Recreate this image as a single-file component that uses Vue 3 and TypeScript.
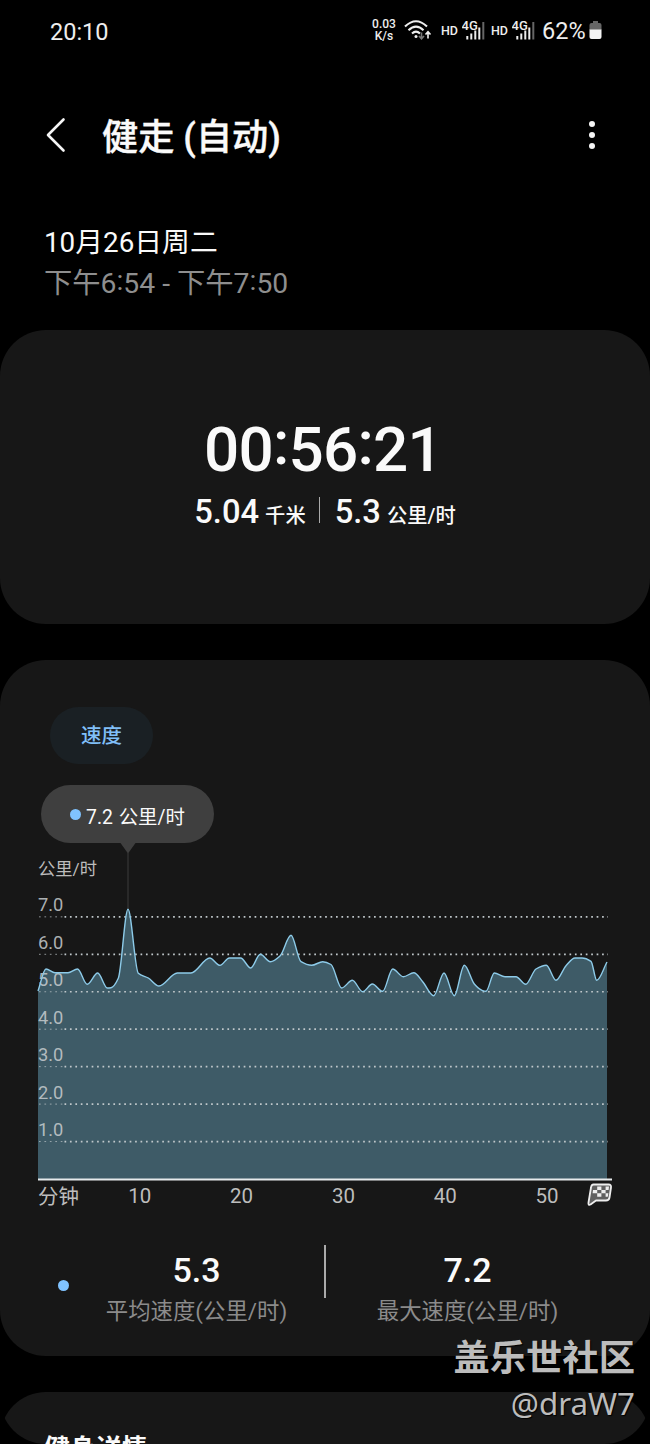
<script setup lang="ts">
type Point = [number, number]

// Speed samples in chart coordinates (origin at the left end of the time axis)
const samples: Point[] = [
  [0, 141], [8, 119], [17, 122.7], [30, 122.7], [39.5, 119], [49.3, 134.3], [59.7, 123], [69.3, 138],
  [73, 137.7], [80.3, 128.3], [90, 59.3], [100.3, 123.3], [110.3, 128], [121, 136], [139.3, 123], [153, 123],
  [171.7, 108], [182, 115.3], [191.3, 108], [202.7, 108], [212.7, 118], [222.3, 104.3], [232.3, 111.7],
  [242, 106], [253, 85.3], [263, 111.7], [273.7, 115.3], [284.7, 111.7], [293, 114.5], [303.7, 138],
  [314.3, 130.3], [324.7, 141.7], [334.3, 134], [344.7, 141.3], [354.7, 119], [365.3, 126.7], [375.8, 122.8],
  [384.7, 131.7], [395.7, 145.7], [406, 123], [416.3, 145.7], [426.3, 115.3], [436.3, 134], [444, 140.3],
  [448, 141.3], [456.3, 123], [467, 126.7], [478, 126.7], [487.7, 134.3], [498, 119], [508.3, 115.3],
  [518, 130.3], [528, 115.7], [537, 108], [544, 108], [553, 111.3], [558.7, 130.3], [569, 112],
]

// Monotone cubic smoothing: flat tangents at every local extreme
function smooth(pts: Point[]): string {
  const n = pts.length
  const d: number[] = []
  for (let i = 0; i < n - 1; i++) d.push((pts[i + 1][1] - pts[i][1]) / (pts[i + 1][0] - pts[i][0]))
  const m = pts.map((_, i) => {
    if (i === 0) return d[0]
    if (i === n - 1) return d[n - 2]
    return d[i - 1] * d[i] <= 0 ? 0 : (2 * d[i - 1] * d[i]) / (d[i - 1] + d[i])
  })
  let path = `M${pts[0][0]} ${pts[0][1]}`
  for (let i = 0; i < n - 1; i++) {
    const [x0, y0] = pts[i]
    const [x1, y1] = pts[i + 1]
    const h = (x1 - x0) / 3
    path += `C${(x0 + h).toFixed(2)} ${(y0 + m[i] * h).toFixed(2)} ${(x1 - h).toFixed(2)} ${(y1 - m[i + 1] * h).toFixed(2)} ${x1} ${y1}`
  }
  return path
}

const line = smooth(samples)
const area = `${line}V329H0Z`
const levels = [7, 6, 5, 4, 3, 2, 1].map((v) => ({ label: v.toFixed(1), y: 329 - v * 37.45 }))
const ticks = [10, 20, 30, 40, 50].map((v) => ({ label: String(v), x: v * 10.18 }))
const stats = [
  { value: '5.3', label: '平均速度(公里/时)' },
  { value: '7.2', label: '最大速度(公里/时)' },
]
</script>

<template>
  <div class="screen">
    <header class="status">
      <span class="clock">20:10</span>
      <div class="indicators">
        <div class="rate"><span>0.03</span><span>K/s</span></div>
        <svg class="wifi" width="28" height="22" viewBox="0 0 28 22">
          <g fill="none" stroke="#eee" stroke-width="2.100">
            <path d="M1 7.500Q12 -3 23 7.500" />
            <path d="M4.500 11.200Q12 4 19.500 11.200" />
            <path d="M8 14.500Q12 10.800 16 14.500" />
          </g>
          <circle cx="12" cy="17.500" r="1.500" fill="#eee" />
          <path d="M17.500 13.500v6M15 17l2.500 2.800 2.500-2.800" fill="none" stroke="#777" stroke-width="1.600" />
          <path d="M24 19.500v-6M21.500 15.500l2.500-2.800 2.500 2.800" fill="none" stroke="#eee" stroke-width="1.600" />
        </svg>
        <div v-for="n in 2" :key="n" class="sim">
          <span class="hd">HD</span>
          <svg width="24" height="22" viewBox="0 0 24 22">
            <text x="-.5" y="10.600" class="net">4G</text>
            <path d="M5.300 17v3.500M9.300 14.500v6M13.300 11.500v9M17.300 8.500v12" stroke="#eee" stroke-width="2" />
            <path d="M21.300 3v17.500" stroke="#666" stroke-width="2" />
          </svg>
        </div>
        <span class="percent">62%</span>
        <svg class="battery" width="13" height="20" viewBox="0 0 13 20">
          <path d="M4 1h5v2h1.500a2 2 0 0 1 2 2v5H.5V5a2 2 0 0 1 2-2H4z" fill="#666" />
          <path d="M.5 9.500h12V17a2 2 0 0 1-2 2h-8a2 2 0 0 1-2-2z" fill="#f4f4f4" />
        </svg>
      </div>
    </header>

    <nav class="bar">
      <svg class="back" width="20" height="36" viewBox="0 0 20 36">
        <path d="M17.500 2.500L2 18L17.500 33.500" fill="none" stroke="#f5f5f5" stroke-width="2.600" stroke-linecap="round" stroke-linejoin="round" />
      </svg>
      <h1>健走 (自动)</h1>
      <svg class="more" width="8" height="30" viewBox="0 0 8 30">
        <g fill="#f5f5f5"><circle cx="4" cy="4" r="3" /><circle cx="4" cy="15" r="3" /><circle cx="4" cy="26" r="3" /></g>
      </svg>
    </nav>

    <div class="when">
      <div class="date">10月26日周二</div>
      <div class="time">下午6<span class="colon">:</span>54 - 下午7<span class="colon">:</span>50</div>
    </div>

    <section class="card summary">
      <div class="duration">00<span class="colon">:</span>56<span class="colon">:</span>21</div>
      <div class="totals">
        <span class="num">5.04</span><span class="unit">千米</span>
        <i></i>
        <span class="num">5.3</span><span class="unit">公里/时</span>
      </div>
    </section>

    <section class="card speed">
      <div class="chip">速度</div>
      <div class="bubble"><b></b><span>7.2 公里/时</span></div>
      <svg class="chart" width="594" height="374" viewBox="-1 0 594 374">
        <path d="M82.500 0h15l-7.500 10.500z" fill="#3f3f3f" />
        <path d="M90 10v56" stroke="#343434" stroke-width="1.300" />
        <text x="0" y="31.500" class="axis-unit">公里/时</text>
        <g transform="translate(0 7)">
          <path :d="area" fill="#3e5b67" />
          <g v-for="l in levels" :key="l.label">
            <path :d="`M1 ${l.y}H25`" class="dots faint" />
            <path :d="`M26.500 ${l.y}H570`" class="dots" />
            <text x="0" :y="l.y - 5.600" class="level">{{ l.label }}</text>
          </g>
          <path :d="line" fill="none" stroke="#8dcbe9" stroke-width="1.400" stroke-linejoin="round" />
          <path d="M0 329.500H574" stroke="#e6eaec" stroke-width="1.800" />
          <text x="0" y="353.500" class="tick">分钟</text>
          <text v-for="t in ticks" :key="t.label" :x="t.x" y="353" class="tick mid">{{ t.label }}</text>
          <g transform="translate(549 332.500)">
            <path d="M6.500 2H21.500Q24.500 2 24 5L22.500 15Q22 18 19 18H9L3.500 22Q1 23 1.500 20L4 5Q4.400 2 6.500 2Z" fill="#606060" stroke="#eee" stroke-width="1.800" stroke-linejoin="round" />
            <path d="M6 7.400h4.200v3.400H5.600zM10.200 4h4.200v3.400h-4.200zM14.400 7.400h4.200v3.400h-4.200zM18.600 4h3.400l-.4 3.400h-3zM10.200 10.800h4.200v3.400h-4.200zM18.600 10.800h2.800l-.6 3.400h-2.200z" fill="#eee" />
          </g>
        </g>
      </svg>
      <div class="stats">
        <b class="key"></b>
        <div v-for="s in stats" :key="s.label" class="stat">
          <div class="value">{{ s.value }}</div>
          <div class="label">{{ s.label }}</div>
        </div>
      </div>
    </section>

    <div class="next">
      <section class="card details"><h2>健身详情</h2></section>
    </div>

    <div class="watermark">
      <div class="community">盖乐世社区</div>
      <div class="author">@draW7</div>
    </div>
  </div>
</template>

<style>
html, body { background: #000; }
</style>

<style scoped>
.screen {
  position: relative;
  width: 650px;
  height: 1444px;
  overflow: hidden;
  background: #000;
  color: #fafafa;
  font-family: Roboto, "Noto Sans CJK SC", sans-serif;
  white-space: nowrap;
}
.status {
  height: 60px;
  box-sizing: border-box;
  padding: 0 48px 0 50px;
  display: flex;
  justify-content: space-between;
  align-items: center;
}
.clock { font-size: 23.5px; color: #eee; line-height: 30px; padding-top: 3px; }
.indicators { display: flex; align-items: center; color: #eee; }
.rate {
  display: flex;
  flex-direction: column;
  align-items: center;
  width: 26px;
  font-size: 12px;
  font-weight: 500;
  line-height: 11.5px;
  padding-top: 1px;
}
.wifi { margin: 0 1px 0 7px; }
.sim { display: flex; align-items: center; margin-left: 8px; }
.sim svg { margin-left: 3px; }
.sim + .sim { margin-left: 5px; }
.hd { font-size: 12.5px; font-weight: 500; width: 18px; }
.net { font-size: 13px; font-weight: 500; fill: #eee; }
.percent { font-size: 23.5px; margin-left: 6px; width: 45px; padding-top: 1px; }
.battery { margin-left: 2px; }
.bar {
  height: 150px;
  box-sizing: border-box;
  padding: 0 54px 0 46px;
  display: flex;
  align-items: center;
}
h1 {
  margin: 5px 0 0 36px;
  font-size: 36.2px;
  font-weight: 500;
  line-height: 50px;
  -webkit-text-stroke: .4px #fafafa;
}
.more { margin-left: auto; }
.when { height: 120px; box-sizing: border-box; padding: 13px 0 0 44px; }
.date { font-size: 27.8px; line-height: 40px; }
.time { font-size: 28.3px; line-height: 40px; color: #8e8e8e; padding-top: 1px; }
.colon { position: relative; top: -.09em; }
.card { background: #171717; border-radius: 46px; }
.summary {
  height: 294px;
  box-sizing: border-box;
  padding-top: 84px;
  display: flex;
  flex-direction: column;
  align-items: center;
}
.duration { font-size: 62px; font-weight: 500; line-height: 72px; letter-spacing: -.8px; margin-right: 4px; }
.duration .colon { top: -.11em; }
.totals { display: flex; align-items: baseline; height: 50px; line-height: 50px; font-weight: 500; padding-top: 1px; }
.num { font-size: 32.7px; }
.unit { font-size: 20.3px; margin-left: 6px; }
.totals i { width: 1px; height: 26px; background: #aaa; margin: 0 15px 4px 13px; align-self: center; }
.speed { margin-top: 36px; height: 696px; box-sizing: border-box; padding: 47px 0 0 37px; }
.chip {
  width: 103px;
  height: 57px;
  margin-left: 13px;
  border-radius: 29px;
  background: #1a2024;
  color: #80bff8;
  font-size: 20.5px;
  font-weight: 500;
  line-height: 58px;
  text-align: center;
}
.bubble {
  width: 173px;
  height: 58px;
  box-sizing: border-box;
  margin: 21px 0 0 4px;
  padding: 2px 0 0 29px;
  border-radius: 29px;
  background: #3f3f3f;
  display: flex;
  align-items: center;
  gap: 5px;
  font-size: 19.4px;
  word-spacing: 1px;
}
.bubble b, .key { width: 11px; height: 11px; border-radius: 50%; background: #80c3ff; }
.bubble b { margin-bottom: 2px; }
.chart { display: block; }
.axis-unit { font-size: 17.3px; fill: #bcbcbc; }
.level { font-size: 18.3px; fill: #c8cdd0; fill-opacity: .85; }
.tick { font-size: 20.5px; fill: #bdbdbd; }
.mid { text-anchor: middle; }
.dots { fill: none; stroke: #c0c8cb; stroke-width: 1.7; stroke-dasharray: 1.7 3.73; }
.faint { stroke-width: 1; stroke-opacity: .7; }
.stats { display: flex; margin-top: 20px; height: 90px; }
.key { flex: none; align-self: center; margin: 6px 37px 0 21px; }
.stat { flex: none; width: 181px; display: flex; flex-direction: column; align-items: center; position: relative; }
.stat + .stat { margin-left: 90px; }
.stat + .stat::before {
  content: "";
  position: absolute;
  left: -53px;
  top: 8px;
  width: 2px;
  height: 53px;
  background: #aaa;
}
.value { font-size: 34px; font-weight: 500; line-height: 42px; margin-top: 12px; }
.label { font-size: 22.4px; line-height: 32px; color: #8b8b8b; margin-top: 4px; }
.next { margin-top: 36px; height: 52px; overflow: hidden; border-radius: 0 0 46px 46px; }
.details { height: 200px; box-sizing: border-box; padding: 38px 0 0 44px; }
h2 { margin: 0; font-size: 25.8px; line-height: 38px; font-weight: 700; }
.watermark {
  position: absolute;
  right: 15px;
  bottom: 19px;
  text-align: right;
  color: #bcbcbc;
  text-shadow: 1px 1px 1px #000;
  font-family: "Noto Sans CJK SC", sans-serif;
}
.community { font-size: 36.3px; font-weight: 700; line-height: 52px; }
.author { font-family: "Noto Sans", sans-serif; font-size: 31.3px; line-height: 44px; }
</style>
